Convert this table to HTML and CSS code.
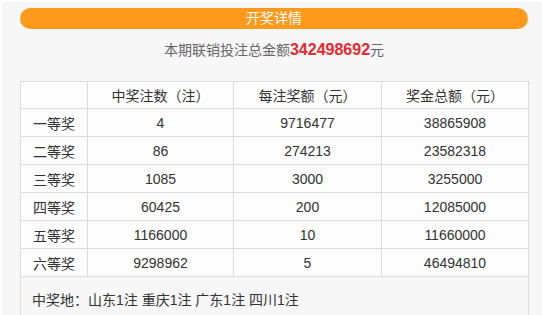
FILE: index.html
```html
<!DOCTYPE html>
<html lang="zh-CN">
<head>
<meta charset="utf-8">
<title>开奖详情</title>
<link rel="stylesheet" href="styles.css">
</head>
<body>
<div class="panel">
  <div class="title-bar">开奖详情</div>
  <p class="summary">本期联销投注总金额<span class="amount">342498692</span>元</p>
  <table class="prize-table">
    <colgroup>
      <col class="c1"><col class="c2"><col class="c3"><col class="c4">
    </colgroup>
    <thead>
      <tr class="head-row"><th></th><th>中奖注数（注）</th><th>每注奖额（元）</th><th>奖金总额（元）</th></tr>
    </thead>
    <tbody>
      <tr><td>一等奖</td><td>4</td><td>9716477</td><td>38865908</td></tr>
      <tr><td>二等奖</td><td>86</td><td>274213</td><td>23582318</td></tr>
      <tr><td>三等奖</td><td>1085</td><td>3000</td><td>3255000</td></tr>
      <tr><td>四等奖</td><td>60425</td><td>200</td><td>12085000</td></tr>
      <tr><td>五等奖</td><td>1166000</td><td>10</td><td>11660000</td></tr>
      <tr><td>六等奖</td><td>9298962</td><td>5</td><td>46494810</td></tr>
      <tr class="foot-row"><td colspan="4">中奖地：山东1注 重庆1注 广东1注 四川1注</td></tr>
    </tbody>
  </table>
</div>
</body>
</html>
```

FILE: styles.css
```css
html, body {
  margin: 0;
  padding: 0;
  background: #ffffff;
}
body {
  padding: 2px 0 0 2px;
  font-family: "Liberation Sans", "Noto Sans CJK SC", sans-serif;
  font-size: 14px;
  color: #333;
}
.panel {
  background: #f7f7f7;
  padding: 6px 14px 0 18px;
  height: 313px;
  box-sizing: border-box;
  overflow: hidden;
}
.title-bar {
  height: 21px;
  line-height: 21px;
  border-radius: 11px;
  background: #fd9a1c;
  color: #fff;
  text-align: center;
  font-size: 14px;
}
.summary {
  margin: 10px 0 0;
  height: 22px;
  line-height: 22px;
  text-align: center;
  color: #666;
  font-size: 14px;
}
.amount {
  color: #e8272e;
  font-weight: bold;
  font-size: 16px;
}
.prize-table {
  margin-top: 20px;
  width: 508px;
  border-collapse: collapse;
  table-layout: fixed;
  background: #fdfdfd;
}
.c1 { width: 67px; }
.c2 { width: 146px; }
.c3 { width: 148px; }
.c4 { width: 147px; }
.prize-table th,
.prize-table td {
  border: 1px solid #dcdcdc;
  height: 27px;
  padding: 0;
  text-align: center;
  font-weight: normal;
  color: #333;
  font-size: 14px;
}
.head-row th {
  height: 26px;
}
.foot-row td {
  text-align: left;
  background: #f7f7f7;
  padding: 12px 11px 13px;
  height: auto;
  border-bottom: none;
}
```
